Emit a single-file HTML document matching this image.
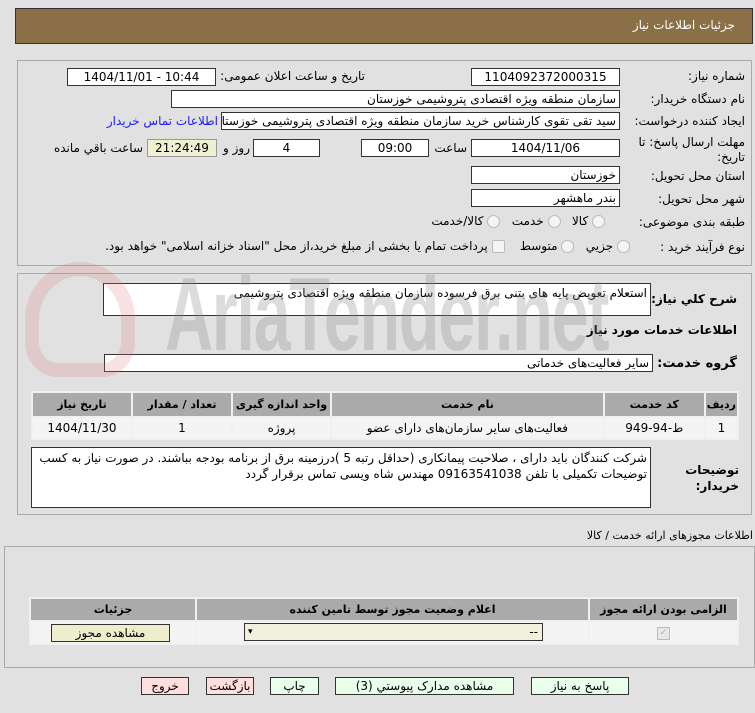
<!DOCTYPE html>
<html><head><meta charset="utf-8"><style>
body{margin:0;width:755px;height:713px;background:#e1e1e1;font-family:"DejaVu Sans","Liberation Sans",sans-serif;font-size:11px;color:#000;position:relative;overflow:hidden}
.a{position:absolute}
.hdr{left:15px;top:8px;width:736px;height:34px;background:#8b6f47;border:1px solid #333;color:#fff;font-size:12px}
.pnl{border:1px solid #aaa;background:#e1e1e1}
.in{position:absolute;background:#fff;border:1px solid #333;box-sizing:border-box;height:18px;line-height:16px;text-align:center;white-space:nowrap;overflow:hidden;font-size:12px}
.r{text-align:right;padding-right:3px;direction:rtl}
.lb{position:absolute;direction:rtl;text-align:right;white-space:nowrap}
.rad{display:inline-block;width:11px;height:11px;border:1px solid #bbb;border-radius:50%;background:#f4f4f4;vertical-align:middle}
table{border-collapse:collapse}
td,th{border:2px solid #f0f0f0;text-align:center}
th{background:#aaa;font-weight:bold;font-size:11px}
.btn{position:absolute;border:1px solid #333;box-sizing:border-box;height:18px;line-height:16px;text-align:center;font-size:12px}
</style></head><body>
<div class="a hdr"><span class="a" style="right:17px;top:9px">جزئیات اطلاعات نیاز</span></div>

<div class="a pnl" style="left:17px;top:60px;width:733px;height:204px"></div>

<div class="lb" style="right:10px;top:69px;font-size:12px">شماره نیاز:</div>
<div class="in" style="left:471px;top:68px;width:149px">1104092372000315</div>
<div class="lb" style="right:390px;top:69px;font-size:12px">تاریخ و ساعت اعلان عمومی:</div>
<div class="in" style="left:67px;top:68px;width:149px">1404/11/01 - 10:44</div>
<div class="lb" style="right:10px;top:92px;font-size:12px">نام دستگاه خریدار:</div>
<div class="in r" style="left:171px;top:90px;width:449px">سازمان منطقه ویژه اقتصادی پتروشیمی خوزستان</div>
<div class="lb" style="right:10px;top:114px;font-size:12px">ایجاد کننده درخواست:</div>
<div class="in r" style="left:221px;top:112px;width:399px">سید تقی تقوی کارشناس خرید سازمان منطقه ویژه اقتصادی پتروشیمی خوزستان</div>
<div class="lb" style="right:537px;top:114px;color:#1a1aff;font-size:12px">اطلاعات تماس خریدار</div>
<div class="lb" style="right:10px;top:135px;font-size:12px">مهلت ارسال پاسخ: تا</div>
<div class="lb" style="right:10px;top:150px;font-size:12px">تاریخ:</div>
<div class="in" style="left:471px;top:139px;width:149px">1404/11/06</div>
<div class="lb" style="right:288px;top:141px;font-size:12px">ساعت</div>
<div class="in" style="left:361px;top:139px;width:68px">09:00</div>
<div class="lb" style="right:505px;top:141px;font-size:12px">روز و</div>
<div class="in" style="left:253px;top:139px;width:67px">4</div>
<div class="in" style="left:147px;top:139px;width:70px;background:#efefd2;border-color:#999">21:24:49</div>
<div class="lb" style="right:612px;top:141px;font-size:12px">ساعت باقي مانده</div>
<div class="lb" style="right:10px;top:169px;font-size:12px">استان محل تحویل:</div>
<div class="in r" style="left:471px;top:166px;width:149px">خوزستان</div>
<div class="lb" style="right:10px;top:192px;font-size:12px">شهر محل تحویل:</div>
<div class="in r" style="left:471px;top:189px;width:149px">بندر ماهشهر</div>
<div class="lb" style="right:10px;top:215px;font-size:12px">طبقه بندی موضوعی:</div>
<div class="lb" style="right:150px;top:214px;font-size:12px"><span class="rad"></span> کالا &nbsp; <span class="rad"></span> خدمت &nbsp; <span class="rad"></span> کالا/خدمت</div>
<div class="lb" style="right:10px;top:240px;font-size:12px">نوع فرآیند خرید :</div>
<div class="lb" style="right:125px;top:239px;font-size:12px"><span class="rad"></span> جزيي &nbsp; <span class="rad"></span> متوسط &nbsp;&nbsp; <span class="rad" style="border-radius:2px"></span> پرداخت تمام یا بخشی از مبلغ خرید،از محل "اسناد خزانه اسلامی" خواهد بود.</div>

<div class="a pnl" style="left:17px;top:273px;width:733px;height:240px;background:transparent"></div>
<div class="lb" style="right:18px;top:292px;font-weight:bold;font-size:12px">شرح کلي نیاز:</div>
<div class="in r" style="left:103px;top:283px;width:548px;height:33px;line-height:18px;text-align:right">استعلام تعویض پایه های بتنی برق فرسوده سازمان منطقه ویژه  اقتصادی پتروشیمی</div>
<div class="lb" style="right:18px;top:323px;font-weight:bold;font-size:12px">اطلاعات خدمات مورد نیاز</div>
<div class="lb" style="right:18px;top:356px;font-weight:bold;font-size:13px">گروه خدمت:</div>
<div class="in r" style="left:104px;top:354px;width:549px;text-align:right">سایر فعالیت‌های خدماتی</div>

<div class="a" style="left:165px;top:255px;font-size:104px;line-height:120px;font-weight:bold;color:rgba(140,140,140,0.3);font-family:'Liberation Sans',sans-serif;letter-spacing:-2px;transform:scaleX(0.64);transform-origin:left;z-index:5">AriaTender.net</div>
<div class="a" style="left:25px;top:262px;width:110px;height:115px;border:14px solid rgba(220,120,120,0.22);border-radius:50% 50% 30% 30%;box-sizing:border-box;z-index:5"></div>

<table class="a" style="left:31px;top:391px;width:708px;direction:rtl;background:#f4f4f4;border:1px solid #ccc">
<tr style="height:25px"><th style="width:27px">ردیف</th><th style="width:97px">کد خدمت</th><th>نام خدمت</th><th style="width:95px">واحد اندازه گیری</th><th style="width:96px">تعداد / مقدار</th><th style="width:96px">تاریخ نیاز</th></tr>
<tr style="height:22px;font-size:12px"><td>1</td><td>ط-94-949</td><td>فعالیت‌های سایر سازمان‌های دارای عضو</td><td>پروژه</td><td>1</td><td>1404/11/30</td></tr>
</table>
<div class="lb" style="right:16px;top:462px;font-weight:bold;font-size:12px;line-height:16px">توضیحات<br>خریدار:</div>
<div class="in r" style="left:31px;top:447px;width:620px;height:61px;white-space:normal;text-align:right;line-height:16px;padding:2px 3px">شرکت کنندگان باید دارای ، صلاحیت پیمانکاری (حداقل رتبه 5 )درزمینه برق از برنامه بودجه بباشند. در صورت نیاز به کسب توضیحات تکمیلی با تلفن 09163541038 مهندس شاه ویسی تماس برقرار گردد</div>

<div class="lb" style="right:2px;top:529px;font-size:11px">اطلاعات مجوزهای ارائه خدمت / کالا</div>
<div class="a pnl" style="left:4px;top:546px;width:749px;height:120px"></div>
<table class="a" style="left:29px;top:597px;width:710px;direction:rtl;background:#f4f4f4;border:1px solid #ccc">
<tr style="height:23px"><th style="width:145px">الزامی بودن ارائه مجوز</th><th>اعلام وضعیت مجوز توسط تامین کننده</th><th style="width:162px">جزئیات</th></tr>
<tr style="height:23px"><td><span style="display:inline-block;width:11px;height:11px;border:1px solid #bbb;background:#e8e8e8;font-size:9px;line-height:11px;color:#aaa">✓</span></td><td></td><td></td></tr>
</table>
<div class="in" style="left:244px;top:623px;width:299px;background:#f0f0dc;text-align:right;padding-right:4px">--<span class="a" style="left:3px;top:0;font-size:9px">▾</span></div>
<div class="btn" style="left:51px;top:624px;width:119px;background:#eeeecc">مشاهده مجوز</div>

<div class="btn" style="left:531px;top:677px;width:98px;background:#eaffea">پاسخ به نیاز</div>
<div class="btn" style="left:335px;top:677px;width:179px;background:#eaffea">مشاهده مدارک پیوستي (3)</div>
<div class="btn" style="left:270px;top:677px;width:49px;background:#eaffea">چاپ</div>
<div class="btn" style="left:206px;top:677px;width:48px;background:#ffdede">بازگشت</div>
<div class="btn" style="left:141px;top:677px;width:48px;background:#ffdede">خروج</div>
</body></html>
